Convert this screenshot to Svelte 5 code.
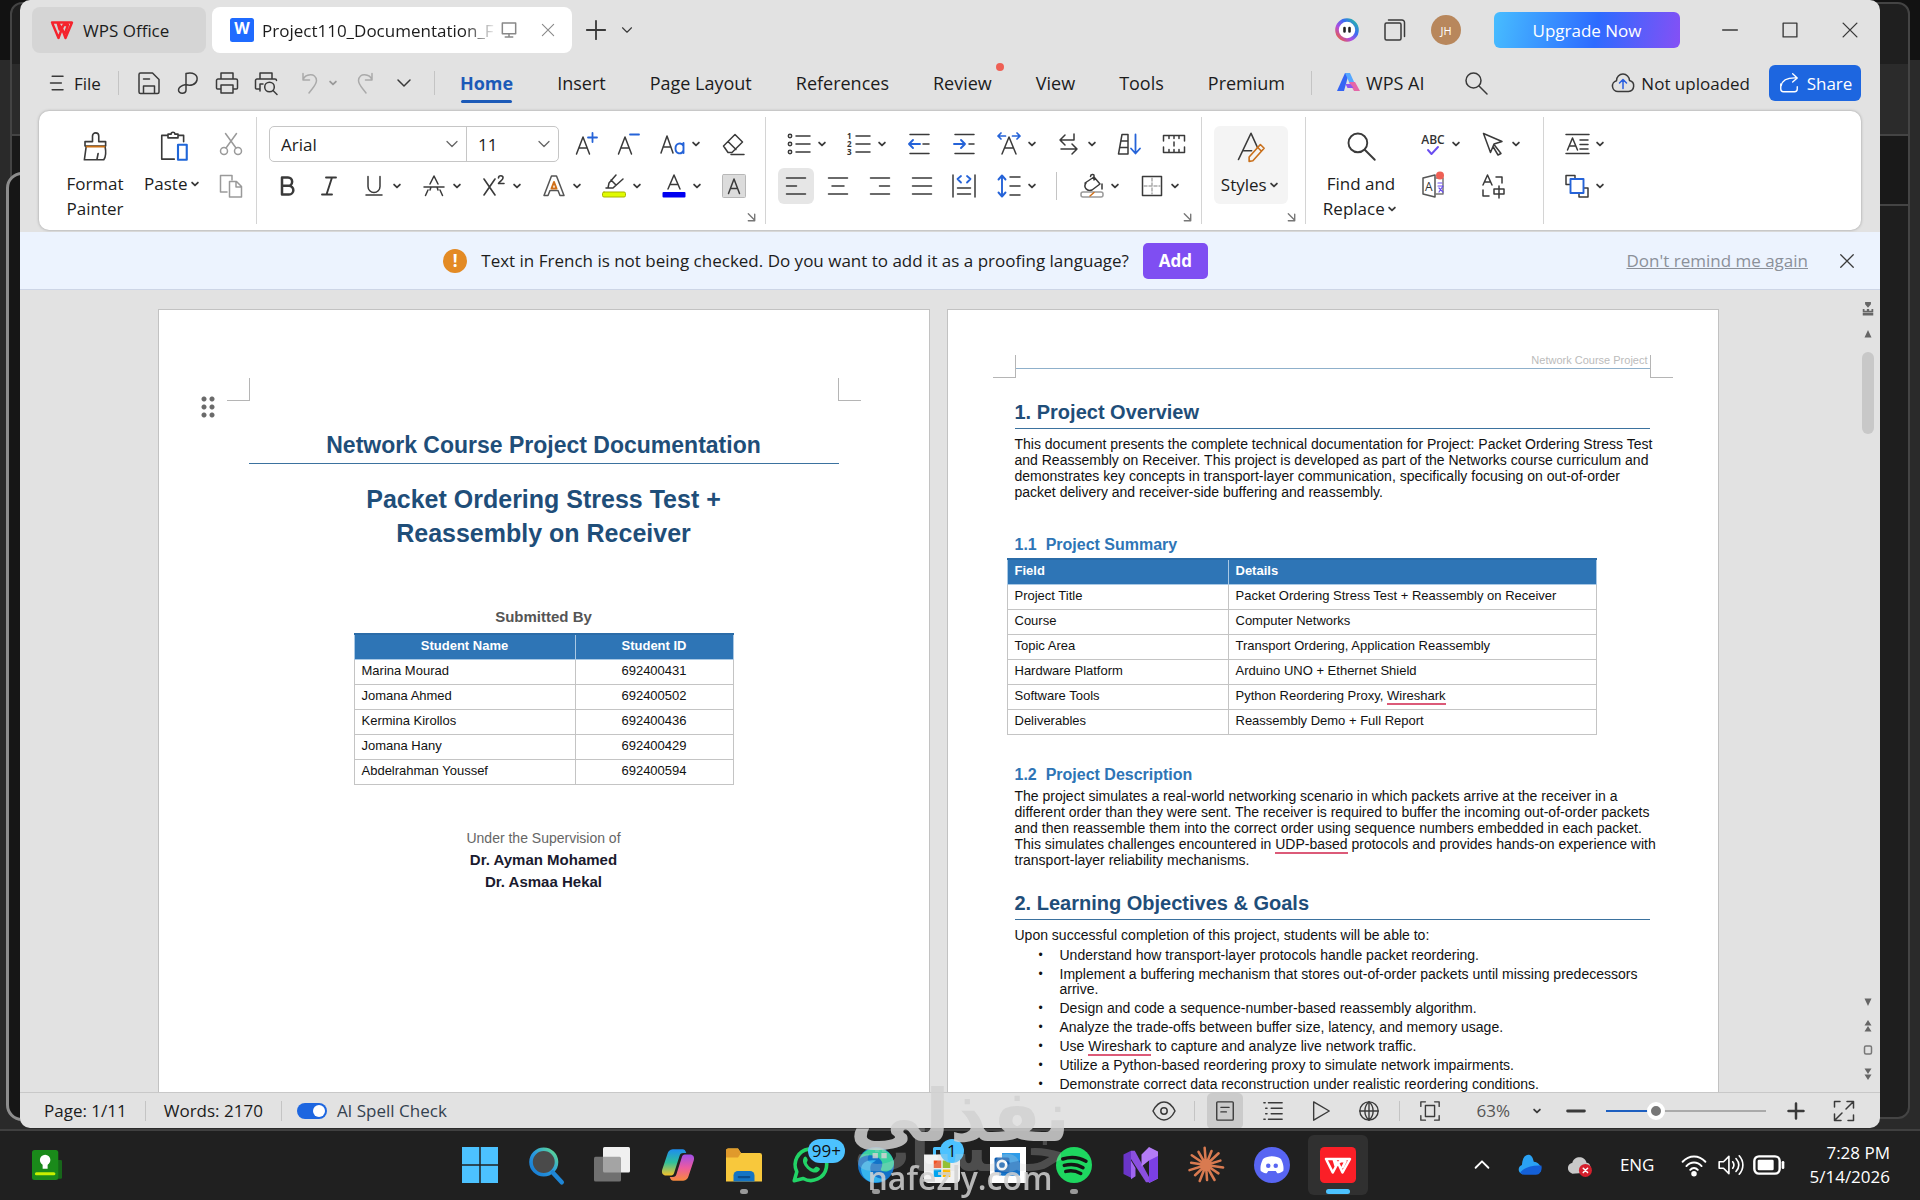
<script lang="ts">
  type Tool = { icon: string; label: string; split?: boolean; active?: boolean; wide?: boolean }

  let zoom = $state(29)
  let spellCheck = $state(true)
  let activeMenu = $state('Home')

  const menus = ['Home', 'Insert', 'Page Layout', 'References', 'Review', 'View', 'Tools', 'Premium']

  const quickTools: Tool[] = [
    { icon: 'save', label: 'Save' },
    { icon: 'pdf', label: 'Export to PDF' },
    { icon: 'print', label: 'Print' },
    { icon: 'preview', label: 'Print preview' },
  ]

  const fontRow: Tool[] = [
    { icon: 'grow', label: 'Grow font' },
    { icon: 'shrink', label: 'Shrink font' },
    { icon: 'case', label: 'Change case', split: true },
    { icon: 'eraser', label: 'Clear formatting', wide: true },
  ]

  const styleRow: Tool[] = [
    { icon: 'bold', label: 'Bold' },
    { icon: 'italic', label: 'Italic' },
    { icon: 'underline', label: 'Underline', split: true },
    { icon: 'strike', label: 'Strikethrough', split: true },
    { icon: 'super', label: 'Superscript', split: true },
    { icon: 'effects', label: 'Text effects', split: true },
    { icon: 'highlight', label: 'Highlight', split: true },
    { icon: 'color', label: 'Font color', split: true },
    { icon: 'shade', label: 'Character shading', wide: true },
  ]

  const listRow: Tool[] = [
    { icon: 'bullets', label: 'Bullets', split: true },
    { icon: 'numbers', label: 'Numbering', split: true },
    { icon: 'outdent', label: 'Decrease indent', wide: true },
    { icon: 'indent', label: 'Increase indent' },
    { icon: 'scale', label: 'Character scale', split: true },
    { icon: 'wrap', label: 'Show marks', split: true },
    { icon: 'sort', label: 'Sort', wide: true },
    { icon: 'tabs', label: 'Tab stops' },
  ]

  const alignRow: Tool[] = [
    { icon: 'left', label: 'Align left', active: true },
    { icon: 'center', label: 'Center' },
    { icon: 'right', label: 'Align right' },
    { icon: 'justify', label: 'Justify' },
    { icon: 'distribute', label: 'Distribute' },
    { icon: 'spacing', label: 'Line spacing', split: true },
  ]

  const fillRow: Tool[] = [
    { icon: 'fill', label: 'Shading', split: true },
    { icon: 'borders', label: 'Borders', split: true },
  ]

  const students = [
    ['Marina Mourad', '692400431'],
    ['Jomana Ahmed', '692400502'],
    ['Kermina Kirollos', '692400436'],
    ['Jomana Hany', '692400429'],
    ['Abdelrahman Youssef', '692400594'],
  ]

  const apps = [
    { icon: 'windows', label: 'Start' },
    { icon: 'tbsearch', label: 'Search' },
    { icon: 'taskview', label: 'Task view' },
    { icon: 'copilot', label: 'Copilot' },
    { icon: 'explorer', label: 'File Explorer', running: true },
    { icon: 'whatsapp', label: 'WhatsApp', badge: '99+' },
    { icon: 'edge', label: 'Edge', running: true },
    { icon: 'store', label: 'Store', badge: '1' },
    { icon: 'outlook', label: 'Outlook' },
    { icon: 'spotify', label: 'Spotify', running: true },
    { icon: 'vs', label: 'Visual Studio' },
    { icon: 'claude', label: 'Claude' },
    { icon: 'discord', label: 'Discord' },
    { icon: 'wps', label: 'WPS Office', current: true },
  ]

  // 14 rays for the starburst icon
  const rays = Array.from({ length: 14 }, (_, i) => {
    const a = (i * Math.PI) / 7 + 0.15
    const r = i % 2 ? 10 : 11.5
    return `M12 12L${(12 + r * Math.cos(a)).toFixed(1)} ${(12 + r * Math.sin(a)).toFixed(1)}`
  }).join('')

  // Everything is drawn on a 24 × 24 grid with inherited stroke
  const icons: Record<string, string> = {
    wpsmark: '<path d="M2 4.500h5.500l2 7M2 4.500l6.500 15.500 3.500-9.500 3.500 9.500 6.500-15.500H7.500l4.500 6 1.500-3.500h4.500l-3 8" stroke="#f5232d" stroke-width="2.400" stroke-linejoin="round"/>',
    doc: '<rect x="0" y="0" width="24" height="24" rx="2.500" fill="#1f6bff" stroke="none"/><text x="12" y="16" font-size="16" font-weight="700" text-anchor="middle" fill="#fff" stroke="none">W</text>',
    monitor: '<path d="M4 3.500h16v13H4zM12 16.500v4M7.500 20.500h9" stroke="#888" stroke-width="1.800"/>',
    close: '<path d="M4.500 4.500l15 15M19.500 4.500l-15 15"/>',
    plus: '<path d="M12 2v20M2 12h20" stroke-width="2"/>',
    chev: '<path d="M6 9l6 6 6-6"/>',
    chevbold: '<path d="M7 9.500l5 5 5-5" stroke-width="3"/>',
    bot: '<circle cx="12" cy="12" r="10" stroke="url(#ring)" stroke-width="3.600" fill="#fff"/><path d="M9.500 10v3.500M14.500 10v3.500" stroke="#222" stroke-width="2.600"/>',
    windowsdup: '<rect x="2" y="5" width="16" height="17" rx="1.500"/><path d="M5.500 2h13.500a2.500 2.500 0 0 1 2.500 2.500V18.500"/>',
    min: '<path d="M4 12h16"/>',
    max: '<path d="M4.500 4.500h15v15h-15z"/>',
    burger: '<path d="M5 4h13M3 12h13M5 20h13" stroke-width="1.800"/>',
    save: '<path d="M2 3.500a1.500 1.500 0 0 1 1.500-1.500H15.500l6.500 6.500V21a1.500 1.500 0 0 1-1.500 1.500h-17A1.500 1.500 0 0 1 2 21zM6.500 22v-7h11v7M6.500 8h6"/>',
    pdf: '<path d="M10 2.500c7-1.500 12 1 11 6.500-1 5-7 6-11 4.500zM10 2.500v16.500c0 4-7.500 4.500-7.500 0 0-3 3-4.500 7.500-5.500"/>',
    print: '<path d="M6 8V2h12v6M6 18H2.500A1 1 0 0 1 1.500 17V9.500A1.500 1.500 0 0 1 3 8h18a1.500 1.500 0 0 1 1.500 1.500V17a1 1 0 0 1-1 1H18M6 14h12v8H6z"/>',
    preview: '<path d="M6 8V2h12v6M6 20V13h3M5 18H2.500A1 1 0 0 1 1.500 17V9.500A1.500 1.500 0 0 1 3 8h18a1.500 1.500 0 0 1 1.500 1.500"/><circle cx="15.500" cy="16" r="4.800"/><path d="M19 19.500l4 4"/>',
    undo: '<path d="M5 2.500v6.500h6.500M5 9c2-6 13-8 13.500.5 0 4-3 6.500-7.500 12.500" stroke="#aaa"/>',
    redo: '<path d="M19 2.500v6.500h-6.500M19 9c-2-6-13-8-13.500.5 0 4 3 6.500 7.500 12.500" stroke="#aaa"/>',
    ai: '<path d="M9 2h4L8 20H1z" fill="#3464f4" stroke="none"/><path d="M9 2h5l5 11h-5z" fill="#55a7ff" stroke="none"/><path d="M13 11h6l5 9h-6z" fill="#e467a8" stroke="none"/><path d="M9.500 13h5l3 4h-6z" fill="#8c55f2" stroke="none"/>',
    search: '<circle cx="9.500" cy="9.500" r="7.500"/><path d="M15 15l8 8"/>',
    cloudup: '<path d="M7 20.500a5.500 5.500 0 0 1-1.500-10.800 6.500 6.500 0 0 1 13-.2A5.600 5.600 0 0 1 17.500 20.500z"/><path d="M12 17.500V9M8.500 12L12 8.500l3.500 3.500" stroke="#2a5fe0"/>',
    share: '<path d="M3 13v5.500a3 3 0 0 0 3 3h12a3 3 0 0 0 3-3V16M3.500 15c1-6 6-9 17-8.500M16 2l5 4.500-5 4.500"/>',
    painter: '<path d="M4 12V8.500h6V4a2.500 2.500 0 0 1 5 0v4.500h5.500V12zM5 12l-1.500 11h15.500c1.500-2 2-6 1-11M14.500 18l-1 5" stroke-width="1.300"/><path d="M5.500 12.500h14" stroke="#c96f12"/>',
    paste: '<path d="M8 3.500H3v19h10M16 3.500h4.500v5M8 5.500h8v-3h-2.500c0-2-3-2-3 0H8z" stroke-width="1.300"/><path d="M16 11h7v12h-7z" stroke="#1f66d8" stroke-width="1.700"/>',
    cut: '<g stroke="#9a9a9a"><circle cx="5" cy="19" r="3.500"/><circle cx="19" cy="19" r="3.500"/><path d="M6.500 1.500L17 16M17.500 1.500L7 16"/></g>',
    copy: '<g stroke="#9a9a9a"><path d="M8 18H1.500V1.500h11.500V6"/><path d="M10.500 7.500h7l5 5v10.500h-12zM17 7.500v5.500h5"/></g>',
    grow: '<path d="M2.500 22l6.500-17 6.500 17M5 16h8"/><path d="M18.500 1v9M14 5.500h9" stroke="#2563d8" stroke-width="1.800"/>',
    shrink: '<path d="M2.500 22l6.500-17 6.500 17M5 16h8"/><path d="M14 2.500h9" stroke="#2563d8" stroke-width="1.800"/>',
    case: '<path d="M0 21L6 4l6 17M2 15h8"/><path d="M22.500 11v10M22.500 14c-2-4-8-3-8 2.500s6 6.500 8 2" stroke="#2563d8" stroke-width="1.900"/>',
    eraser: '<path d="M2.500 14L14 2.500l7.500 7.500L11 20.500H7zM7 9.500l8 8M10 22.500h13"/>',
    bold: '<path d="M7 3.500h6a4 4 0 0 1 0 8.300H7zM7 11.800h7a4.300 4.300 0 0 1 0 8.700H7z" stroke-width="2.500"/>',
    italic: '<path d="M9 3.500h10M5 20.500h10M15 3.500l-5.500 17" stroke-width="1.900"/>',
    underline: '<path d="M6 2.500v10a6 6 0 0 0 12 0v-10M4 21h16"/>',
    strike: '<path d="M8 10l4-8 4 8M6 16l-2.500 5.500M18 16l2.500 5.500M2 13h20M8 16l1-3M16 16l-1-3"/>',
    super: '<path d="M2 5l11 16M13 5L2 21" stroke-width="1.600"/><path d="M16.500 4c0-3 5-3 4.500 0 0 2-3 3-4.500 5.500h5.500" stroke-width="1.600"/>',
    effects: '<path d="M2 21.500L9.500 2h5L22 21.500h-4l-2-5H8l-2 5z" stroke="#555"/><path d="M9.500 14.500l2.500-6.500 2.500 6.500z" stroke="#d0701a" stroke-width="2"/>',
    highlight: '<path d="M4 14h7l10-9M14 1L7 9l-1 5M12 13l2-2-5-5"/><rect x=".5" y="18" width="23" height="5" rx="1.500" fill="#e0fb00" stroke="#a9b300" stroke-width="1"/>',
    color: '<path d="M6 15L12 1l6 14M8 10.500h8"/><rect x=".5" y="18" width="23" height="5.500" rx="1" fill="#0000f0" stroke="none"/>',
    shade: '<rect x=".5" y=".5" width="23" height="23" rx="1" fill="#dcdcdc" stroke="#b8b8b8" stroke-width="1"/><path d="M6.500 19.500L12 5l5.500 14.500M8.500 14.500h7"/>',
    bullets: '<circle cx="3" cy="4" r="1.700"/><circle cx="3" cy="12" r="1.700"/><circle cx="3" cy="20" r="1.700"/><path d="M9 4h14M9 12h14M9 20h14"/>',
    numbers: '<g font-size="8" font-weight="700" fill="#333" stroke="none"><text x="0" y="7">1</text><text x="0" y="15">2</text><text x="0" y="23">3</text></g><path d="M9 4h14M9 12h14M9 20h14"/>',
    outdent: '<path d="M3 2.500h19M3 21.500h19M16 12h6"/><path d="M13 12H2M6 8l-4 4 4 4" stroke="#2563d8" stroke-width="1.900"/>',
    indent: '<path d="M3 2.500h19M3 21.500h19M17 12h5"/><path d="M2 12h11M9 8l4 4-4 4" stroke="#2563d8" stroke-width="1.900"/>',
    scale: '<path d="M5 22L12 5l7 17M7.500 16h9"/><path d="M8.500 4H1M4 1L1 4l3 3M15.500 4H23M20 1l3 3-3 3" stroke="#2563d8" stroke-width="1.700"/>',
    wrap: '<path d="M17 2v6H3M8 3L3 8l5 5M4 17h16M15 12l5 5-5 5"/>',
    sort: '<path d="M1.500 22L5 2.500h6V22zM4 9h7M3 15.500h8"/><path d="M18.500 2.500V21M14 16.500l4.500 5 4.500-5" stroke="#2563d8" stroke-width="1.800"/>',
    tabs: '<path d="M1.500 9V3.500h21V9M7 3.500v3M12 3.500v3M17 3.500v3M1.500 15v5.500h21V15M7 20.500v-3M12 20.500v-3M17 20.500v-3M12 10v4"/>',
    left: '<path d="M2.500 4h19M2.500 12h10M2.500 20h19"/>',
    center: '<path d="M2.500 4h19M6 12h12M2.500 20h19"/>',
    right: '<path d="M2.500 4h19M11.500 12h10M2.500 20h19"/>',
    justify: '<path d="M2.500 4h19M2.500 12h19M2.500 20h19"/>',
    distribute: '<path d="M1 1v22M23 1v22M5.500 14h13M5.500 20h13"/><path d="M9 2L5.500 5 9 8.500M15 2l3.500 3L15 8.500" stroke="#2563d8" stroke-width="1.800"/>',
    spacing: '<path d="M13 3h10M13 12h10M13 21h10"/><path d="M5 2v20M1.500 5.500L5 1.500l3.500 4M1.500 18.500L5 22.500l3.500-4" stroke="#2563d8" stroke-width="1.900"/>',
    fill: '<path d="M5 9l9-6 6 7-8 6c-5 2-9-3-6-7M14 6V1.500c0-1.500-3.500-1.500-3.500 1M22 10v5"/><rect x="1" y="18" width="22" height="5" rx="2" stroke="#999"/><path d="M10 22l4-3.500" stroke="#d0701a"/>',
    borders: '<path d="M2.500 2.500h19v19h-19z"/><path d="M12 4v16M4 12h16" stroke="#aaa" stroke-dasharray="3 2"/>',
    styles: '<path d="M2 22L12 1l5 11M5.500 15h7" stroke-width="1.300"/><path d="M10.500 20l9-10 3 3-9 10-3 .5zM17 12l3 3" stroke="#c9701c" stroke-width="1.300"/>',
    abc: '<text x="12" y="12" font-size="12" font-weight="600" text-anchor="middle" fill="#333" stroke="none">ABC</text><path d="M7 18l3.500 4 6.500-7" stroke="#6a4df0" stroke-width="1.900"/>',
    cursor: '<path d="M2.500 1.500L21 9.500l-8 2.500-3.500 8.500zM13 12.500l7 9-3 1.500-5-8.500"/>',
    translate: '<path d="M2 4l12-3v22L2 20z" stroke="#555"/><path d="M14 4h8v16h-8" stroke="#777"/><text x="4" y="17" font-size="12" fill="#333" stroke="none">A</text><path d="M17 9h4M17 12h5l-4 6M18 14l4 4" stroke="#6a4df0" stroke-width="1.200"/><circle cx="19" cy="1.500" r="4" fill="#ee6055" stroke="none"/>',
    convert: '<path d="M2 11L6.500 1 11 11M3.500 8h6M15 3h6v6M2 16v6h6M13 15h10v5H13zM18 12v12"/>',
    para: '<path d="M1 2.500h23M1 21.500h23M2.500 18L7.500 6l5 12M4.500 14h6M15 8h8M15 12.500h8M15 17h8"/>',
    arrange: '<path d="M1 1.500h9v9H1zM14 14h9v9h-9z" fill="#fff"/><path d="M5.500 5h13v14h-13z" fill="#fff" stroke="#2563d8" stroke-width="1.900"/>',
    launcher: '<path d="M5 4l12 12M19 5v14H5" stroke="#777" stroke-width="3"/>',
    eye: '<path d="M1 12c6-12 16-12 22 0-6 12-16 12-22 0z"/><circle cx="12" cy="12" r="3.200"/>',
    page: '<rect x="3" y="2" width="18" height="20" rx="1"/><path d="M7.500 8h9M7.500 13h6"/>',
    outline: '<path d="M7 3h15M10 9h12M10 15h12M7 21h15M2 3h1.500M4 9h1.500M4 15h1.500M2 21h1.500"/>',
    play: '<path d="M4 2l17 10L4 22z"/>',
    globe: '<circle cx="12" cy="12" r="10"/><path d="M2 12h20M12 2v20M12 2c-6 5-6 15 0 20M12 2c6 5 6 15 0 20"/>',
    fit: '<path d="M2 7V2h5M17 2h5v5M2 17v5h5M17 22h5v-5M7 6h10v12H7z"/>',
    expand: '<path d="M14 10l7-7M15 2.500h6.500V9M10 14l-7 7M2.500 15v6.500H9M2.500 8V2.500H8M21.500 16v5.500H16"/>',
    minus: '<path d="M2 12h20" stroke-width="3.500"/>',
    zoomin: '<path d="M12 3v18M3 12h18" stroke-width="3"/>',
    tip: '<rect x="20" y="8" width="4" height="15" rx="1" fill="#17661a" stroke="none"/><rect x="0" y="0" width="21" height="24" rx="2" fill="#1a8a1a" stroke="none"/><circle cx="10.500" cy="8" r="4.200" fill="#fff" stroke="none"/><path d="M8.500 11h4v4h-4z" fill="#fff" stroke="none"/><path d="M3.500 19h14" stroke="#c8f000" stroke-width="2.400"/>',
    windows: '<g fill="#4cc2ff" stroke="none"><path d="M0 0h11.500v11.500H0zM12.500 0H24v11.500H12.500zM0 12.500h11.500V24H0zM12.500 12.500H24V24H12.500z"/></g>',
    tbsearch: '<circle cx="10.500" cy="10" r="8.500" fill="#4a4a4a" stroke="url(#sky)" stroke-width="2.400"/><path d="M16.500 17l6 6.500" stroke="#1f86d6" stroke-width="3"/>',
    taskview: '<rect x="6" y="0" width="18" height="17" rx="1" fill="#f0f0f0" stroke="none"/><rect x="0" y="6.500" width="18" height="16.500" rx="1" fill="#8b8b8b" fill-opacity=".75" stroke="none"/>',
    copilot: '<path d="M15 1.500H8.500C6.500 1.500 5.500 3 5 4.500L1.500 15c-.7 2.500.5 4 2.500 4h3.500c1 0 1.500-.5 2-2L13 6c.5-1.500 1-2 2.500-2h2c-.5-1.500-1-2.500-2.500-2.500z" fill="url(#cpa)" stroke="none"/><path d="M9 22.500h6.500c2 0 3-1.500 3.500-3L22.500 9c.7-2.500-.5-4-2.500-4h-3.500c-1 0-1.500.5-2 2L11 18c-.5 1.500-1 2-2.500 2h-2c.5 1.500 1 2.500 2.500 2.500z" fill="url(#cpb)" stroke="none"/>',
    explorer: '<path d="M0 2.500A1.500 1.500 0 0 1 1.500 1H8l2 3h12.500A1.500 1.500 0 0 1 24 5.500V23H0z" fill="#f8c83c" stroke="none"/><path d="M0 2.500A1.500 1.500 0 0 1 1.500 1H8l2 3-2 3H0z" fill="#e09a2c" stroke="none"/><path d="M5 23v-4a3 3 0 0 1 3-3h8a3 3 0 0 1 3 3v4z" fill="#1474c4" stroke="none"/><path d="M8.500 20h7" stroke="#0b4d8c" stroke-width="1.500"/>',
    whatsapp: '<path d="M1.500 22.500l1.700-6A10.500 10.500 0 1 1 7.500 21z" stroke="#22d366" stroke-width="2.400"/><path d="M7.500 8c1-2.500 2-2 3 .5 0 1-1 1.500-.5 2.500 1 2 2.500 3 4 3.500 1 0 1.500-1.800 2.500-1.300 3 1 2.500 2 .5 3.500-4 2-11-5-9.500-8.700z" fill="#22d366" stroke="none"/>',
    edge: '<circle cx="12" cy="12" r="12" fill="#1272c8" stroke="none"/><path d="M1 8C5-2 21-2 24 10c0 6-5 7-8 6-2-1 1-3 0-6C14 5 5 4 1 8z" fill="#3ad0a0" stroke="none"/><path d="M9 11c-3 6 3 11 10 10-6 5-16 3-17-6 0-5 5-7 10-6z" fill="#36b4ee" stroke="none"/>',
    store: '<path d="M7 6V1h10v5" stroke="#4cc2ff" stroke-width="2"/><path d="M0 5h24v16a3 3 0 0 1-3 3H3a3 3 0 0 1-3-3z" fill="#f2f2f2" stroke="none"/><path d="M6.500 9h5v5h-5z" fill="#f25022" stroke="none"/><path d="M12.500 9h5v5h-5z" fill="#7fba00" stroke="none"/><path d="M6.500 15h5v5h-5z" fill="#00a4ef" stroke="none"/><path d="M12.500 15h5v5h-5z" fill="#ffb900" stroke="none"/>',
    outlook: '<path d="M0 0h24v24H0z" fill="#fff" stroke="none"/><path d="M8 4h12v15H8z" fill="#2d9be8" stroke="none"/><path d="M6 12l14-3v10H6z" fill="#1673c8" stroke="none"/><rect x="3" y="7" width="10" height="10" rx="1" fill="#0f5fb4" stroke="none"/><circle cx="8" cy="12" r="2.800" stroke="#fff" stroke-width="1.800"/>',
    spotify: '<circle cx="12" cy="12" r="12" fill="#1ed760" stroke="none"/><path d="M4.500 8c5-1.500 11-1 15.500 1.500M5.500 12.300c4-1 9-.5 12.500 1.500M6.500 16.300c3-.8 7-.3 10 1.300" stroke="#151515" stroke-width="2.300"/>',
    vs: '<path d="M1 5l5-2.500v18L1 18z" fill="#6a35c8" stroke="none"/><path d="M6 2.500h2.500L18 20v3.500h-2L6 8z" fill="#8a4fe0" stroke="none"/><path d="M6 21.500l3-2V14L6 9z" fill="#a066f0" stroke="none"/><path d="M13 5l5-5 6 3v18l-6 3V9l-5 4z" fill="#b47cf6" stroke="none"/><path d="M18 9v15l6-3V6z" fill="#7b3fe4" stroke="none"/>',
    claude: `<path d="${rays}" stroke="#d97a50" stroke-width="1.700"/>`,
    discord: '<circle cx="12" cy="12" r="12" fill="#5865f2" stroke="none"/><path d="M6 8c3-2.500 9-2.500 12 0 1.500 3 2 5.500 1.500 8-2 1.500-3 1.500-4 1.500l-1-1.500h-5l-1 1.500c-1 0-2 0-4-1.500C4 13.500 4.500 11 6 8z" fill="#fff" stroke="none"/><circle cx="9.500" cy="12.500" r="1.500" fill="#5865f2" stroke="none"/><circle cx="14.500" cy="12.500" r="1.500" fill="#5865f2" stroke="none"/>',
    wps: '<rect width="24" height="24" rx="3" fill="#fb1f27" stroke="none"/><path d="M4 8h5l1.500 5M4 8l4.500 9L12 10.500 15 17l5-9H9l3 3 1.500-1.500H17l-2 4" stroke="#fff" stroke-width="1.700"/>',
    up: '<path d="M5 15l7-7 7 7" stroke-width="2"/>',
    onedrive: '<path d="M5 20.500C0 19 1 13 4.500 12 5 5 8 2 11 2.500c3 .5 4 4 4.500 6.500 5 0 8 6 6 9.500z" fill="#2aa2f4" stroke="none"/><path d="M3 19c3-4 9-7 19.500-6.500 1 4-1 8.500-5 8.500H7c-2 0-3-.5-4-2z" fill="#1460d8" stroke="none"/>',
    cloudoff: '<path d="M5 20c-6-2-5-9 0-10 1-7 12-7 13 0 4 0 5 6 2 9z" fill="#c9c9c9" stroke="none"/><circle cx="17" cy="17" r="6" fill="#d51f2c" stroke="none"/><path d="M15 15l4 4M19 15l-4 4" stroke="#fff" stroke-width="1.400"/>',
    wifi: '<path d="M1.500 9c6-6.500 15-6.500 21 0M5 13c4-4.500 10-4.500 14 0M8.500 16.500c2-2.300 5-2.300 7 0" stroke-width="1.800"/><circle cx="12" cy="20" r="1.800" fill="#fff"/>',
    volume: '<path d="M2 9h4l5-5v16l-5-5H2zM14.500 9c1.500 2 1.500 4 0 6M17.500 6c3.500 4 3.500 8 0 12M20.500 3.500c4.500 5 4.500 12 0 17"/>',
    battery: '<rect x="1" y="5.500" width="19" height="13" rx="3.500" stroke-width="1.800"/><rect x="3.500" y="8" width="12" height="8" rx="1" fill="#fff" stroke="none"/><path d="M22.500 10v4" stroke-width="2"/>',
    triup: '<path d="M12 4l7 15H5z" fill="#666" stroke="none"/>',
    tridown: '<path d="M5 5h14l-7 15z" fill="#666" stroke="none"/>',
    dblup: '<path d="M12 0l7 11H5zM12 12l7 11H5z" fill="#666" stroke="none"/>',
    dbldown: '<path d="M5 1h14l-7 11zM5 13h14l-7 11z" fill="#666" stroke="none"/>',
    ruler: '<path d="M7 0h10v4l-5 6-5-6zM3 12h3v3h4v-3h4v3h4v-3h3v11H3v-4h18v-1H3z" fill="#666" stroke="none"/>',
    target: '<rect x="5" y="4" width="14" height="16" rx="3" stroke="#777" stroke-width="3"/>',
  }
</script>

{#snippet icon(name: string, size = 24)}
  <svg class="icon" width={size} height={size} viewBox="0 0 24 24" aria-hidden="true">{@html icons[name]}</svg>
{/snippet}

{#snippet toolbar(tools: Tool[])}
  {#each tools as t}
    <button class="tool" class:split={t.split} class:wide={t.wide} class:active={t.active} aria-label={t.label}>
      {@render icon(t.icon)}
      {#if t.split}{@render icon('chevbold', 14)}{/if}
    </button>
  {/each}
{/snippet}

<svg class="defs" aria-hidden="true">
  <defs>
    <linearGradient id="ring" x1="0" y1="1" x2="1" y2="0">
      <stop offset="0" stop-color="#f0612a" /><stop offset=".35" stop-color="#b04de0" />
      <stop offset=".65" stop-color="#3a6cf4" /><stop offset="1" stop-color="#22c39a" />
    </linearGradient>
    <linearGradient id="sky" x1="0" y1="1" x2="1" y2="0">
      <stop offset="0" stop-color="#1577d0" /><stop offset=".5" stop-color="#2a9be0" /><stop offset="1" stop-color="#62e08a" />
    </linearGradient>
    <linearGradient id="cpa" x1="0" y1="0" x2="0" y2="1">
      <stop offset="0" stop-color="#1d8df0" /><stop offset=".5" stop-color="#2fbf9c" /><stop offset="1" stop-color="#f5c22a" />
    </linearGradient>
    <linearGradient id="cpb" x1="0" y1="0" x2="0" y2="1">
      <stop offset="0" stop-color="#a04fe8" /><stop offset=".5" stop-color="#ec5aa0" /><stop offset="1" stop-color="#f78a3c" />
    </linearGradient>
  </defs>
</svg>

<div class="desktop">
  <div class="behind" aria-hidden="true">
    <div class="frame"></div>
    <div class="pane"></div>
  </div>

  <main class="window">
    <header class="titlebar">
      <button class="tab home">{@render icon('wpsmark')}WPS Office</button>
      <div class="tab current">
        {@render icon('doc')}
        <span class="name">Project110_Documentation_F</span>
        {@render icon('monitor', 20)}
        <button class="plain dim" aria-label="Close tab">{@render icon('close', 18)}</button>
      </div>
      <button class="plain new" aria-label="New tab">{@render icon('plus', 22)}</button>
      <button class="plain" aria-label="Tab list">{@render icon('chev', 18)}</button>
      <div class="account">
        <button class="plain" aria-label="Assistant">{@render icon('bot')}</button>
        <button class="plain" aria-label="Windows">{@render icon('windowsdup')}</button>
        <button class="avatar">JH</button>
      </div>
      <button class="upgrade">Upgrade Now</button>
      <button class="sys" aria-label="Minimize">{@render icon('min', 22)}</button>
      <button class="sys" aria-label="Maximize">{@render icon('max', 22)}</button>
      <button class="sys" aria-label="Close">{@render icon('close', 22)}</button>
    </header>

    <nav class="menubar">
      <button class="file">{@render icon('burger', 20)}File</button>
      <i class="rule"></i>
      {#each quickTools as t}
        <button class="quick" aria-label={t.label}>{@render icon(t.icon)}</button>
      {/each}
      <button class="tool split pale" aria-label="Undo">{@render icon('undo')}{@render icon('chevbold', 14)}</button>
      <button class="quick" aria-label="Redo">{@render icon('redo')}</button>
      <button class="quick" aria-label="More">{@render icon('chev')}</button>
      <i class="rule"></i>
      <div class="menus">
        {#each menus as m}
          <button class="menu" class:on={m === activeMenu} class:dot={m === 'Review'} onclick={() => (activeMenu = m)}>{m}</button>
        {/each}
      </div>
      <i class="rule"></i>
      <button class="wpsai">{@render icon('ai')}WPS AI</button>
      <button class="plain" aria-label="Search">{@render icon('search')}</button>
      <button class="upload">{@render icon('cloudup')}Not uploaded</button>
      <button class="share">{@render icon('share', 22)}Share</button>
    </nav>

    <section class="ribbon">
      <div class="group clip">
        <button class="big">{@render icon('painter', 30)}<span>Format<br />Painter</span></button>
        <button class="big">{@render icon('paste', 30)}<span>Paste {@render icon('chevbold', 14)}</span></button>
        <div class="rows">
          <div class="row"><button class="tool" aria-label="Cut">{@render icon('cut')}</button></div>
          <div class="row"><button class="tool" aria-label="Copy">{@render icon('copy')}</button></div>
        </div>
      </div>
      <div class="group font">
        <div class="rows">
          <div class="row">
            <div class="combo">
              <label class="family">
                <select aria-label="Font"><option>Arial</option></select>
                {@render icon('chev', 20)}
              </label>
              <label class="size">
                <select aria-label="Font size"><option>11</option></select>
                {@render icon('chev', 20)}
              </label>
            </div>
            {@render toolbar(fontRow)}
          </div>
          <div class="row">{@render toolbar(styleRow)}</div>
        </div>
        <button class="launch" aria-label="Font settings">{@render icon('launcher', 11)}</button>
      </div>
      <div class="group paragraph">
        <div class="rows">
          <div class="row">{@render toolbar(listRow)}</div>
          <div class="row">{@render toolbar(alignRow)}<i class="rule"></i>{@render toolbar(fillRow)}</div>
        </div>
        <button class="launch" aria-label="Paragraph settings">{@render icon('launcher', 11)}</button>
      </div>
      <div class="group styles">
        <button class="big tinted">{@render icon('styles', 30)}<span>Styles {@render icon('chevbold', 14)}</span></button>
        <button class="launch" aria-label="Style settings">{@render icon('launcher', 11)}</button>
      </div>
      <div class="group find">
        <button class="big">{@render icon('search', 30)}<span>Find and<br />Replace {@render icon('chevbold', 14)}</span></button>
        <div class="rows">
          <div class="row">
            <button class="tool split" aria-label="Spell check">{@render icon('abc')}{@render icon('chevbold', 14)}</button>
            <button class="tool split" aria-label="Select">{@render icon('cursor')}{@render icon('chevbold', 14)}</button>
          </div>
          <div class="row">
            <button class="tool split" aria-label="Translate">{@render icon('translate')}</button>
            <button class="tool split" aria-label="Convert text">{@render icon('convert')}</button>
          </div>
        </div>
      </div>
      <div class="group last">
        <div class="rows">
          <div class="row">
            <button class="tool split" aria-label="Text direction">{@render icon('para')}{@render icon('chevbold', 14)}</button>
          </div>
          <div class="row">
            <button class="tool split" aria-label="Arrange">{@render icon('arrange')}{@render icon('chevbold', 14)}</button>
          </div>
        </div>
      </div>
    </section>

    <div class="notice">
      <div class="message">
        <b class="warn">!</b>
        <span>Text in French is not being checked. Do you want to add it as a proofing language?</span>
        <button class="add">Add</button>
      </div>
      <div class="dismiss">
        <a href="#dismiss">Don't remind me again</a>
        <button class="plain" aria-label="Close notice">{@render icon('close', 20)}</button>
      </div>
    </div>

    <div class="workspace">
      <div class="pages">
        <article class="page cover">
          <i class="crop tl"></i>
          <i class="crop tr"></i>
          <i class="grip"></i>
          <h1>Network Course Project Documentation</h1>
          <h2>Packet Ordering Stress Test +<br />Reassembly on Receiver</h2>
          <h3>Submitted By</h3>
          <table class="students">
            <thead>
              <tr><th>Student Name</th><th>Student ID</th></tr>
            </thead>
            <tbody>
              {#each students as [name, id]}
                <tr><td>{name}</td><td>{id}</td></tr>
              {/each}
            </tbody>
          </table>
          <p class="super">Under the Supervision of<br /><b>Dr. Ayman Mohamed</b><br /><b>Dr. Asmaa Hekal</b></p>
        </article>

        <article class="page body">
          <i class="crop tl"></i>
          <i class="crop tr"></i>
          <div class="running">Network Course Project</div>
          <h1>1. Project Overview</h1>
          <p>
            This document presents the complete technical documentation for Project: Packet Ordering Stress Test<br />
            and Reassembly on Receiver. This project is developed as part of the Networks course curriculum and<br />
            demonstrates key concepts in transport-layer communication, specifically focusing on out-of-order<br />
            packet delivery and receiver-side buffering and reassembly.
          </p>
          <h2>1.1&nbsp; Project Summary</h2>
          <table class="summary">
            <thead>
              <tr><th>Field</th><th>Details</th></tr>
            </thead>
            <tbody>
              <tr><td>Project Title</td><td>Packet Ordering Stress Test + Reassembly on Receiver</td></tr>
              <tr><td>Course</td><td>Computer Networks</td></tr>
              <tr><td>Topic Area</td><td>Transport Ordering, Application Reassembly</td></tr>
              <tr><td>Hardware Platform</td><td>Arduino UNO + Ethernet Shield</td></tr>
              <tr><td>Software Tools</td><td>Python Reordering Proxy, <u>Wireshark</u></td></tr>
              <tr><td>Deliverables</td><td>Reassembly Demo + Full Report</td></tr>
            </tbody>
          </table>
          <h2>1.2&nbsp; Project Description</h2>
          <p>
            The project simulates a real-world networking scenario in which packets arrive at the receiver in a<br />
            different order than they were sent. The receiver is required to buffer the incoming out-of-order packets<br />
            and then reassemble them into the correct order using sequence numbers embedded in each packet.<br />
            This simulates challenges encountered in <u>UDP-based</u> protocols and provides hands-on experience with<br />
            transport-layer reliability mechanisms.
          </p>
          <h1>2. Learning Objectives &amp; Goals</h1>
          <p>Upon successful completion of this project, students will be able to:</p>
          <ul>
            <li>Understand how transport-layer protocols handle packet reordering.</li>
            <li>Implement a buffering mechanism that stores out-of-order packets until missing predecessors<br />arrive.</li>
            <li>Design and code a sequence-number-based reassembly algorithm.</li>
            <li>Analyze the trade-offs between buffer size, latency, and memory usage.</li>
            <li>Use <u>Wireshark</u> to capture and analyze live network traffic.</li>
            <li>Utilize a Python-based reordering proxy to simulate network impairments.</li>
            <li>Demonstrate correct data reconstruction under realistic reordering conditions.</li>
          </ul>
        </article>
      </div>

      <div class="scroll">
        <button class="plain" aria-label="Ruler">{@render icon('ruler', 14)}</button>
        <button class="plain" aria-label="Scroll up">{@render icon('triup', 12)}</button>
        <i class="thumb"></i>
        <button class="plain" aria-label="Scroll down">{@render icon('tridown', 12)}</button>
        <button class="plain" aria-label="Previous page">{@render icon('dblup', 12)}</button>
        <button class="plain" aria-label="Browse by">{@render icon('target', 12)}</button>
        <button class="plain" aria-label="Next page">{@render icon('dbldown', 12)}</button>
      </div>
    </div>

    <footer class="status">
      <span>Page: 1/11</span>
      <i class="rule"></i>
      <span>Words: 2170</span>
      <i class="rule"></i>
      <label class="spell"><input type="checkbox" bind:checked={spellCheck} />AI Spell Check</label>
      <div class="views">
        <button class="view" aria-label="Eye protection">{@render icon('eye')}</button>
        <i class="rule"></i>
        <button class="view active" aria-label="Print layout">{@render icon('page', 22)}</button>
        <button class="view" aria-label="Outline">{@render icon('outline', 22)}</button>
        <button class="view" aria-label="Reading view">{@render icon('play', 22)}</button>
        <button class="view" aria-label="Web layout">{@render icon('globe', 22)}</button>
        <i class="rule"></i>
        <button class="view" aria-label="Fit page">{@render icon('fit', 22)}</button>
        <button class="percent">63%{@render icon('chevbold', 14)}</button>
        <button class="plain" aria-label="Zoom out">{@render icon('minus', 20)}</button>
        <input class="zoom" type="range" min="0" max="100" bind:value={zoom} aria-label="Zoom" style:--fill="{zoom}%" />
        <button class="plain" aria-label="Zoom in">{@render icon('zoomin', 20)}</button>
        <button class="plain full" aria-label="Full screen">{@render icon('expand')}</button>
      </div>
    </footer>
  </main>

  <footer class="taskbar">
    <button class="plain tips" aria-label="Tips">{@render icon('tip', 30)}</button>
    <div class="apps">
      {#each apps as a}
        <button class="app" class:current={a.current} aria-label={a.label}>
          {@render icon(a.icon, 36)}
          {#if a.badge}<span class="badge">{a.badge}</span>{/if}
          {#if a.running || a.current}<i class="mark"></i>{/if}
        </button>
      {/each}
    </div>
    <div class="tray">
      {@render icon('up', 22)}
      {@render icon('onedrive', 26)}
      {@render icon('cloudoff', 26)}
      <span class="lang">ENG</span>
      <div class="network">
        {@render icon('wifi', 26)}
        {@render icon('volume', 26)}
        {@render icon('battery', 32)}
      </div>
      <time>7:28 PM<br />5/14/2026</time>
    </div>
  </footer>

  <div class="stamp" aria-hidden="true">
    <span class="ar" lang="ar">نفذلي</span>
    <span class="ar faint" lang="ar">خمسات</span>
    <span class="site">nafezly.com</span>
  </div>
</div>

<style>
  :global(body) {
    margin: 0;
    background: #161616;
  }
  .defs { position: absolute; width: 0; height: 0; }
  .desktop {
    position: relative;
    height: 100vh;
    display: flex;
    flex-direction: column;
    overflow: hidden;
    font-family: "Segoe UI", "Open Sans", sans-serif;
    font-size: 17px;
    color: #1c1c1c;
    background: linear-gradient(#121212 60px, #2a2a2a 60px);
  }
  button, select {
    font: inherit;
    color: inherit;
    border: 0;
    padding: 0;
    background: none;
    white-space: nowrap;
  }
  .icon {
    flex: none;
    overflow: visible;
    fill: none;
    stroke: #3a3a3a;
    stroke-width: 1.5;
    stroke-linecap: round;
    stroke-linejoin: round;
    display: block;
  }
  .plain { display: flex; align-items: center; justify-content: center; }
  .rule { flex: none; width: 1px; height: 24px; background: #c4c4c4; }

  /* windows left open under the editor */
  .behind { position: absolute; inset: 0 0 71px; }
  .frame {
    position: absolute;
    inset: 2px 10px 10px;
    border: 2px solid #444;
    border-radius: 12px;
    background: linear-gradient(#1f1f1f 60px, #2b2b2b 60px, #2b2b2b 130px, #444 130px, #444 132px, #191919 132px, #191919 200px, #444 200px, #444 202px, #1e1e1e 202px);
  }
  .pane {
    position: absolute;
    inset: 172px auto 8px 6px;
    width: 60px;
    border: 3px solid #8d8d8d;
    border-radius: 16px;
    background: #161616;
  }

  .window {
    position: relative;
    flex: 1;
    min-height: 0;
    margin: 0 40px 1px 20px;
    display: flex;
    flex-direction: column;
    background: #e2e2e2;
    border-radius: 10px;
    overflow: hidden;
  }

  .titlebar { display: flex; align-items: center; height: 60px; padding-left: 12px; }
  .tab {
    display: flex;
    align-items: center;
    height: 46px;
    border-radius: 8px;
    box-sizing: border-box;
  }
  .tab.home { gap: 9px; width: 174px; padding-left: 18px; background: #d5d5d5; }
  .tab.current { gap: 2px; width: 360px; margin-left: 6px; padding: 0 15px 0 18px; background: #fff; }
  .name {
    flex: 1;
    margin-left: 6px;
    white-space: nowrap;
    mask-image: linear-gradient(to right, #000 86%, transparent);
  }
  .tab .dim { margin-left: 18px; }
  .dim .icon { stroke: #8a8a8a; }
  .new { margin: 0 11px 0 13px; }
  .account { display: flex; align-items: center; gap: 24px; margin: 0 33px 0 auto; }
  .avatar {
    width: 30px;
    height: 30px;
    border-radius: 50%;
    background: #b8875c;
    color: #fff;
    font-size: 11px;
  }
  .upgrade {
    width: 186px;
    height: 36px;
    margin-right: 20px;
    border-radius: 6px;
    color: #fff;
    background: linear-gradient(100deg, #47bdff, #2d6bff 55%, #8550f5);
  }
  .sys { width: 60px; height: 40px; display: flex; align-items: center; justify-content: center; }

  .menubar { display: flex; align-items: center; height: 46px; padding: 0 19px 0 28px; }
  .file { display: flex; align-items: center; gap: 6px; margin-right: 17px; }
  .file + .rule { margin-right: 11px; }
  .quick { width: 39px; display: flex; justify-content: center; }
  .quick + .rule { margin-left: 10px; }
  .pale .icon { stroke: #999; }
  .menus { display: flex; gap: 44px; margin: 0 26px 0 25px; font-size: 18px; }
  .menu { position: relative; height: 40px; }
  .menu.on { font-weight: 700; color: #1c5ab8; }
  .menu.on::after {
    content: '';
    position: absolute;
    inset: auto 1px 0;
    height: 3px;
    border-radius: 2px;
    background: #1c5ab8;
  }
  .menu.dot::after {
    content: '';
    position: absolute;
    top: 0;
    right: -12px;
    width: 8px;
    height: 8px;
    border-radius: 50%;
    background: #ee6055;
  }
  .wpsai { display: flex; align-items: center; gap: 6px; margin: 0 40px 0 24px; font-size: 18px; }
  .upload { display: flex; align-items: center; gap: 6px; margin: 0 19px 0 auto; }
  .share {
    display: flex;
    align-items: center;
    justify-content: center;
    gap: 7px;
    width: 92px;
    height: 36px;
    border-radius: 6px;
    background: #1d66e0;
    color: #fff;
  }
  .share .icon { stroke: #fff; }

  .ribbon {
    display: flex;
    height: 119px;
    margin: 5px 19px 2px;
    border-radius: 10px;
    background: #fff;
    box-shadow: 0 0 3px #999;
  }
  .group {
    position: relative;
    display: flex;
    box-sizing: border-box;
    margin: 6px 0;
    padding: 6px 10px 0 9px;
    border-right: 1px solid #d4d4d4;
  }
  .group.last { border: 0; }
  .clip { width: 218px; padding: 6px 4px 0 17px; }
  .font { width: 509px; }
  .paragraph { width: 436px; }
  .styles { width: 104px; padding-left: 12px; }
  .find { width: 238px; }
  .rows { display: flex; flex-direction: column; gap: 6px; margin-top: 3px; }
  .row { display: flex; align-items: center; height: 36px; }
  .row .rule { margin: 0 11px; height: 28px; }
  .tool {
    display: flex;
    align-items: center;
    justify-content: center;
    width: 42px;
    height: 36px;
    border-radius: 6px;
  }
  .tool.split { justify-content: flex-start; gap: 4px; width: 60px; padding-left: 12px; box-sizing: border-box; }
  .tool.wide { justify-content: flex-start; width: 48px; padding-left: 12px; box-sizing: border-box; }
  .tool.active { width: 36px; margin: 0 3px; background: #e6e6e6; }
  .combo {
    display: flex;
    width: 290px;
    height: 36px;
    margin: 0 6px 0 3px;
    border: 1px solid #c6c6c6;
    border-radius: 5px;
    box-sizing: border-box;
  }
  .combo label { display: flex; align-items: center; padding: 0 4px 0 11px; }
  .combo select { flex: 1; appearance: none; outline: none; }
  .combo .icon { stroke: #666; }
  .family { flex: 1; }
  .size { width: 76px; border-left: 1px solid #c6c6c6; }
  .big {
    display: flex;
    flex-direction: column;
    align-items: center;
    gap: 10px;
    height: 96px;
    padding-top: 8px;
    box-sizing: border-box;
    line-height: 25px;
  }
  .big span { text-align: center; }
  .big span .icon { display: inline-block; margin-left: -4px; vertical-align: -1px; }
  .clip .big { width: 78px; }
  .clip .rows { margin-left: -2px; }
  .find .big { width: 92px; }
  .find .rows { margin-left: 2px; }
  .big.tinted { width: 74px; height: 78px; margin-top: 3px; padding-top: 6px; border-radius: 6px; background: #f4f4f4; }
  .launch { position: absolute; right: 8px; bottom: 1px; }

  .notice {
    display: grid;
    grid-template-columns: 422fr auto 670fr;
    align-items: center;
    height: 57px;
    background: #ecf3fe;
    border-bottom: 1px solid #cdd5e6;
  }
  .message { grid-column: 2; display: flex; align-items: center; gap: 14px; }
  .warn {
    width: 24px;
    height: 24px;
    border-radius: 50%;
    background: #e38a24;
    color: #fff;
    text-align: center;
    line-height: 24px;
  }
  .add {
    width: 65px;
    height: 36px;
    border-radius: 5px;
    background: #7f4ef2;
    color: #fff;
    font-weight: 700;
  }
  .dismiss { display: flex; align-items: center; justify-content: flex-end; gap: 29px; padding-right: 23px; }
  .dismiss a { color: #8b9099; }

  .workspace { flex: 1; min-height: 0; display: flex; overflow: hidden; }
  .pages {
    flex: 1;
    display: flex;
    justify-content: center;
    align-items: flex-start;
    gap: 17px;
    padding-top: 19px;
    font-family: Arial, "Liberation Sans", sans-serif;
    font-size: 14px;
    color: #111;
  }
  .page {
    position: relative;
    box-sizing: border-box;
    width: 772px;
    height: 1090px;
    border: 1px solid #c2c2c2;
    background: #fff;
    white-space: nowrap;
  }
  .page h1, .page h2, .page h3, .page p, .page ul { margin: 0; }
  .page h1 { color: #1f4e79; border-bottom: 1px solid #3b729f; padding-bottom: 4px; }
  .cover { padding: 121px 90px 0; text-align: center; }
  .cover h1 { font-size: 23px; line-height: 28px; }
  .cover h2 { margin-top: 18px; font-size: 25px; line-height: 34px; color: #1f4e79; }
  .cover h3 { margin-top: 57px; font-size: 15px; line-height: 20px; color: #555; }
  .super { line-height: 21px; color: #666; }
  .cover .super { margin-top: 43px; }
  .super b { font-size: 15px; color: #1a1a2e; }
  .body { padding: 43px 68px 0 67px; }
  .running {
    font-size: 11px;
    line-height: 14px;
    padding: 0 2px 1px;
    text-align: right;
    color: #bbb;
    border-bottom: 1px solid #8fb0cb;
  }
  .body h1 { margin-top: 23px; font-size: 20px; line-height: 24px; }
  .body .running + h1 { margin-top: 31px; }
  .body h2 { margin: 35px 0 3px; font-size: 16px; line-height: 20px; color: #2e75b6; }
  .body table + h2 { margin-top: 30px; }
  .body p { line-height: 16px; }
  .body h1 + p { margin-top: 7px; }
  .body ul { margin-top: 5px; padding: 0 0 0 45px; list-style: none; line-height: 15px; }
  .body li { position: relative; margin-bottom: 4px; }
  .body li::before { content: '•'; position: absolute; left: -21px; font-size: 12px; }
  u { text-decoration: none; border-bottom: 2px solid #dc5a78; }

  table { border-collapse: collapse; table-layout: fixed; font-size: 13px; }
  th, td { height: 22px; padding: 0 7px 2px; line-height: 16px; border: 1px solid #c4c4c4; text-align: left; }
  thead { border-top: 2px solid #2b6ca8; }
  th { background: #2e75b6; color: #fff; border-color: #a9c8e4; }
  .students { width: 380px; margin: 6px auto 0; }
  .students th:first-child { width: 206px; }
  .students th, .students td:last-child { text-align: center; }
  .summary { width: 590px; margin-left: -8px; }
  .summary th:first-child { width: 206px; }

  .crop {
    position: absolute;
    width: 22px;
    height: 22px;
    border-bottom: 1px solid #b5b5b5;
  }
  .crop.tl { border-right: 1px solid #b5b5b5; }
  .crop.tr { border-left: 1px solid #b5b5b5; }
  .cover .crop { top: 68px; }
  .cover .tl { left: 68px; }
  .cover .tr { right: 68px; }
  .body .crop { top: 45px; }
  .body .tl { left: 45px; }
  .body .tr { right: 45px; }
  .grip {
    position: absolute;
    left: 41px;
    top: 85px;
    width: 16px;
    height: 24px;
    background: radial-gradient(circle, #6a6a6a 2px, transparent 3px) 0 0 / 8px 8px;
  }

  .scroll {
    width: 24px;
    padding: 12px 0;
    display: flex;
    flex-direction: column;
    align-items: center;
    gap: 12px;
  }
  .scroll .thumb { width: 12px; height: 82px; margin-bottom: auto; border-radius: 6px; background: #c8c8c8; }

  .status {
    display: flex;
    align-items: center;
    gap: 18px;
    height: 36px;
    box-sizing: border-box;
    padding: 0 24px;
    border-top: 1px solid #c8c8c8;
  }
  .status .rule { height: 20px; }
  .spell { display: flex; align-items: center; gap: 10px; color: #34414f; margin-left: -3px; }
  .spell input {
    appearance: none;
    width: 30px;
    height: 16px;
    margin: 0;
    border-radius: 8px;
    background: #999;
  }
  .spell input::before {
    content: '';
    display: block;
    width: 12px;
    height: 12px;
    margin: 2px;
    border-radius: 50%;
    background: #fff;
  }
  .spell input:checked { background: #1d66e0; }
  .spell input:checked::before { margin-left: 16px; }
  .views { display: flex; align-items: center; margin-left: auto; }
  .view { display: flex; align-items: center; justify-content: center; width: 48px; height: 36px; }
  .views .rule { margin: 0 6px; }
  .view.active { width: 36px; margin: 0 6px; border-radius: 5px; background: #cbcbcb; }
  .percent { display: flex; align-items: center; gap: 20px; margin: 0 22px 0 23px; color: #555; }
  .zoom {
    appearance: none;
    width: 160px;
    height: 18px;
    margin: 0 20px;
    background: linear-gradient(to right, #1d5fc0 var(--fill), #aaa var(--fill)) center / 100% 2px no-repeat;
  }
  .zoom::-webkit-slider-thumb {
    appearance: none;
    width: 18px;
    height: 18px;
    border: 4px solid #fff;
    border-radius: 50%;
    background: #777;
  }
  .full { margin-left: 26px; }

  .taskbar {
    position: relative;
    display: grid;
    grid-template-columns: 448fr auto 550fr;
    align-items: center;
    height: 71px;
    box-sizing: border-box;
    padding-bottom: 2px;
    border-top: 2px solid #404040;
    background: #202020;
    color: #fff;
  }
  .tips { justify-self: start; margin-left: 32px; }
  .apps { display: flex; gap: 6px; }
  .app {
    position: relative;
    display: flex;
    align-items: center;
    justify-content: center;
    width: 60px;
    height: 60px;
    border-radius: 6px;
  }
  .app.current { background: #303030; }
  .mark {
    position: absolute;
    bottom: 1px;
    width: 8px;
    height: 5px;
    border-radius: 3px;
    background: #999;
  }
  .current .mark { width: 24px; background: #4cc2ff; }
  .badge {
    position: absolute;
    top: 4px;
    left: 28px;
    min-width: 24px;
    padding: 0 4px;
    box-sizing: border-box;
    border-radius: 12px;
    background: #4cc2ff;
    color: #111;
    line-height: 24px;
  }
  .tray { display: flex; align-items: center; justify-content: flex-end; padding-right: 30px; gap: 24px; }
  .tray .icon { stroke: #fff; }
  .lang { margin: 0 3px; }
  .network { display: flex; align-items: center; gap: 10px; }
  .tray time { text-align: right; line-height: 24px; }

  .stamp {
    position: absolute;
    left: 840px;
    bottom: 0;
    width: 240px;
    height: 112px;
    color: #d2d2d2;
    opacity: 0.85;
    text-align: center;
    pointer-events: none;
  }
  .stamp span { position: absolute; left: 0; right: 0; }
  .ar { top: -14px; font: 700 72px/84px "DejaVu Sans", sans-serif; }
  .ar.faint { top: 22px; font-size: 56px; opacity: 0.3; }
  .site { bottom: 0; font-size: 32px; font-weight: 600; line-height: 44px; }
</style>
